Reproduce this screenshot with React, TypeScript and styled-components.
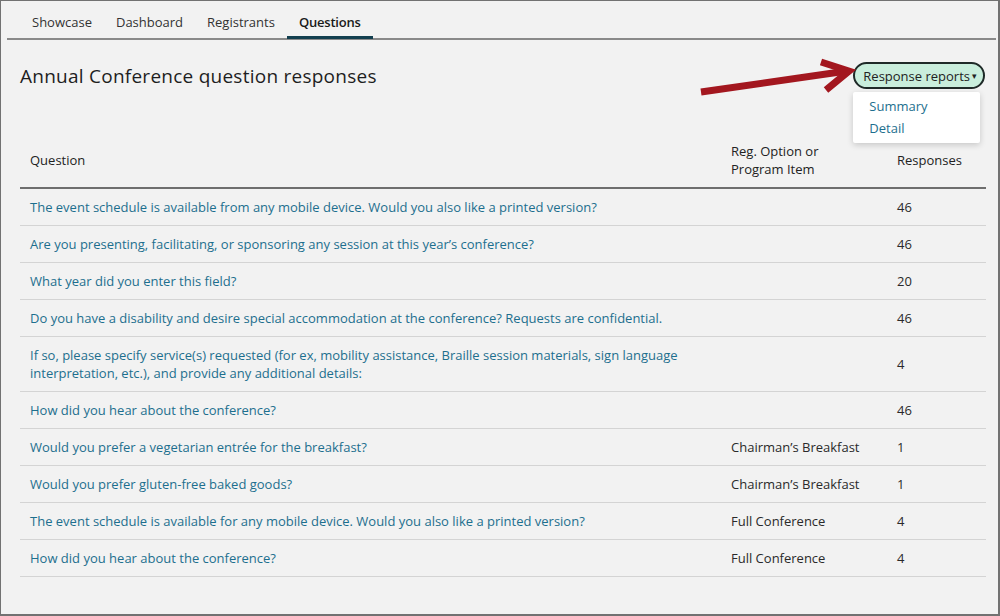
import styled, { createGlobalStyle } from "styled-components";

// questions report page for an event: tabs, title with report menu, and the response table

const GlobalStyle = createGlobalStyle`
  html, body {
    margin: 0;
    padding: 0;
    background: #f2f2f2;
  }
  * {
    box-sizing: border-box;
  }
`;

type Row = { question: string; option?: string; responses: number };

const rows: Row[] = [
  { question: "The event schedule is available from any mobile device. Would you also like a printed version?", responses: 46 },
  { question: "Are you presenting, facilitating, or sponsoring any session at this year\u2019s conference?", responses: 46 },
  { question: "What year did you enter this field?", responses: 20 },
  { question: "Do you have a disability and desire special accommodation at the conference? Requests are confidential.", responses: 46 },
  {
    question:
      "If so, please specify service(s) requested (for ex, mobility assistance, Braille session materials, sign language interpretation, etc.), and provide any additional details:",
    responses: 4,
  },
  { question: "How did you hear about the conference?", responses: 46 },
  { question: "Would you prefer a vegetarian entr\u00e9e for the breakfast?", option: "Chairman\u2019s Breakfast", responses: 1 },
  { question: "Would you prefer gluten-free baked goods?", option: "Chairman\u2019s Breakfast", responses: 1 },
  { question: "The event schedule is available for any mobile device. Would you also like a printed version?", option: "Full Conference", responses: 4 },
  { question: "How did you hear about the conference?", option: "Full Conference", responses: 4 },
];

const tabs = ["Showcase", "Dashboard", "Registrants", "Questions"];

const Frame = styled.div`
  position: relative;
  width: 1000px;
  height: 616px;
  border: 1px solid #727272;
  border-right-width: 2px;
  border-bottom-width: 2px;
  background: #f2f2f2;
  font-family: "Open Sans", "Liberation Sans", sans-serif;
  color: #222;
  overflow: hidden;
`;

const TabBar = styled.nav`
  display: flex;
  margin: 0 2px 0 6px;
  padding-left: 13px;
  border-bottom: 2px solid #8a8a8a;
`;

const Tab = styled.div<{ $active?: boolean }>`
  padding: 12px 12px 5px;
  font-size: 13px;
  line-height: 18px;
  font-weight: ${(p) => (p.$active ? 600 : 400)};
  letter-spacing: ${(p) => (p.$active ? "-0.2px" : "0")};
  color: ${(p) => (p.$active ? "#1a1a1a" : "#333")};
  border-bottom: 3px solid ${(p) => (p.$active ? "#123f4f" : "transparent")};
  margin-bottom: -1px;
`;

const Content = styled.main`
  padding: 22px 14px 0 19px;
`;

const TitleRow = styled.div`
  display: flex;
  align-items: center;
  justify-content: space-between;
  height: 27px;
`;

const Title = styled.h1`
  margin: 0;
  font-size: 19px;
  font-weight: 400;
  letter-spacing: 0.25px;
  color: #1e1e1e;
`;

const MenuWrap = styled.div`
  position: relative;
  margin-right: -1px;
`;

const ReportButton = styled.button`
  display: flex;
  align-items: center;
  gap: 2px;
  height: 27px;
  padding: 0 6px 0 8px;
  border: 2px solid #1f2a28;
  border-radius: 14px;
  background: #c9eedc;
  font-family: inherit;
  font-size: 13px;
  color: #222;
  cursor: pointer;
`;

const Caret = styled.span`
  font-size: 9px;
  line-height: 1;
`;

const Menu = styled.ul`
  position: absolute;
  top: 30px;
  left: 0;
  width: 127px;
  margin: 0;
  padding: 3px 0 4px;
  list-style: none;
  background: #fff;
  border-radius: 2px;
  box-shadow: 0 2px 6px rgba(0, 0, 0, 0.18);
`;

const MenuItem = styled.li`
  padding: 0 16px;
  font-size: 13px;
  line-height: 22px;
  color: #1d6f8e;
`;

const Arrow = styled.svg`
  position: absolute;
  left: 0;
  top: 0;
  pointer-events: none;
`;

const Table = styled.table`
  width: 966px;
  margin-top: 44px;
  border-collapse: collapse;
  font-size: 13px;
  line-height: 18px;
`;

const HeadCell = styled.th<{ $width?: number }>`
  width: ${(p) => (p.$width ? `${p.$width}px` : "auto")};
  padding: 9px 10px;
  text-align: left;
  font-weight: 400;
  color: #222;
  border-bottom: 2px solid #6e6e6e;
  vertical-align: middle;
`;

const Cell = styled.td<{ $link?: boolean }>`
  padding: 9px 10px;
  color: ${(p) => (p.$link ? "#1d6f8e" : "#2a2a2a")};
  border-bottom: 1.5px solid #d4d4d4;
  vertical-align: middle;
`;

export default function App() {
  return (
    <>
      <GlobalStyle />
      <Frame>
        <TabBar>
          {tabs.map((t) => (
            <Tab key={t} $active={t === "Questions"}>
              {t}
            </Tab>
          ))}
        </TabBar>
        <Content>
          <TitleRow>
            <Title>Annual Conference question responses</Title>
            <MenuWrap>
              <ReportButton>
                Response reports<Caret>▾</Caret>
              </ReportButton>
              <Menu>
                <MenuItem>Summary</MenuItem>
                <MenuItem>Detail</MenuItem>
              </Menu>
            </MenuWrap>
          </TitleRow>
          <Table>
            <thead>
              <tr>
                <HeadCell>Question</HeadCell>
                <HeadCell $width={166}>
                  Reg. Option or
                  <br />
                  Program Item
                </HeadCell>
                <HeadCell $width={99}>Responses</HeadCell>
              </tr>
            </thead>
            <tbody>
              {rows.map((r, i) => (
                <tr key={i}>
                  <Cell $link>{r.question}</Cell>
                  <Cell>{r.option ?? ""}</Cell>
                  <Cell>{r.responses}</Cell>
                </tr>
              ))}
            </tbody>
          </Table>
        </Content>
        <Arrow width="1000" height="616" viewBox="0 0 1000 616">
          <g fill="none" stroke="#a3171f" strokeWidth="7" strokeLinejoin="miter">
            <line x1="700" y1="91" x2="846" y2="70" />
            <polyline points="820,61 848,70 825,89" />
          </g>
        </Arrow>
      </Frame>
    </>
  );
}
